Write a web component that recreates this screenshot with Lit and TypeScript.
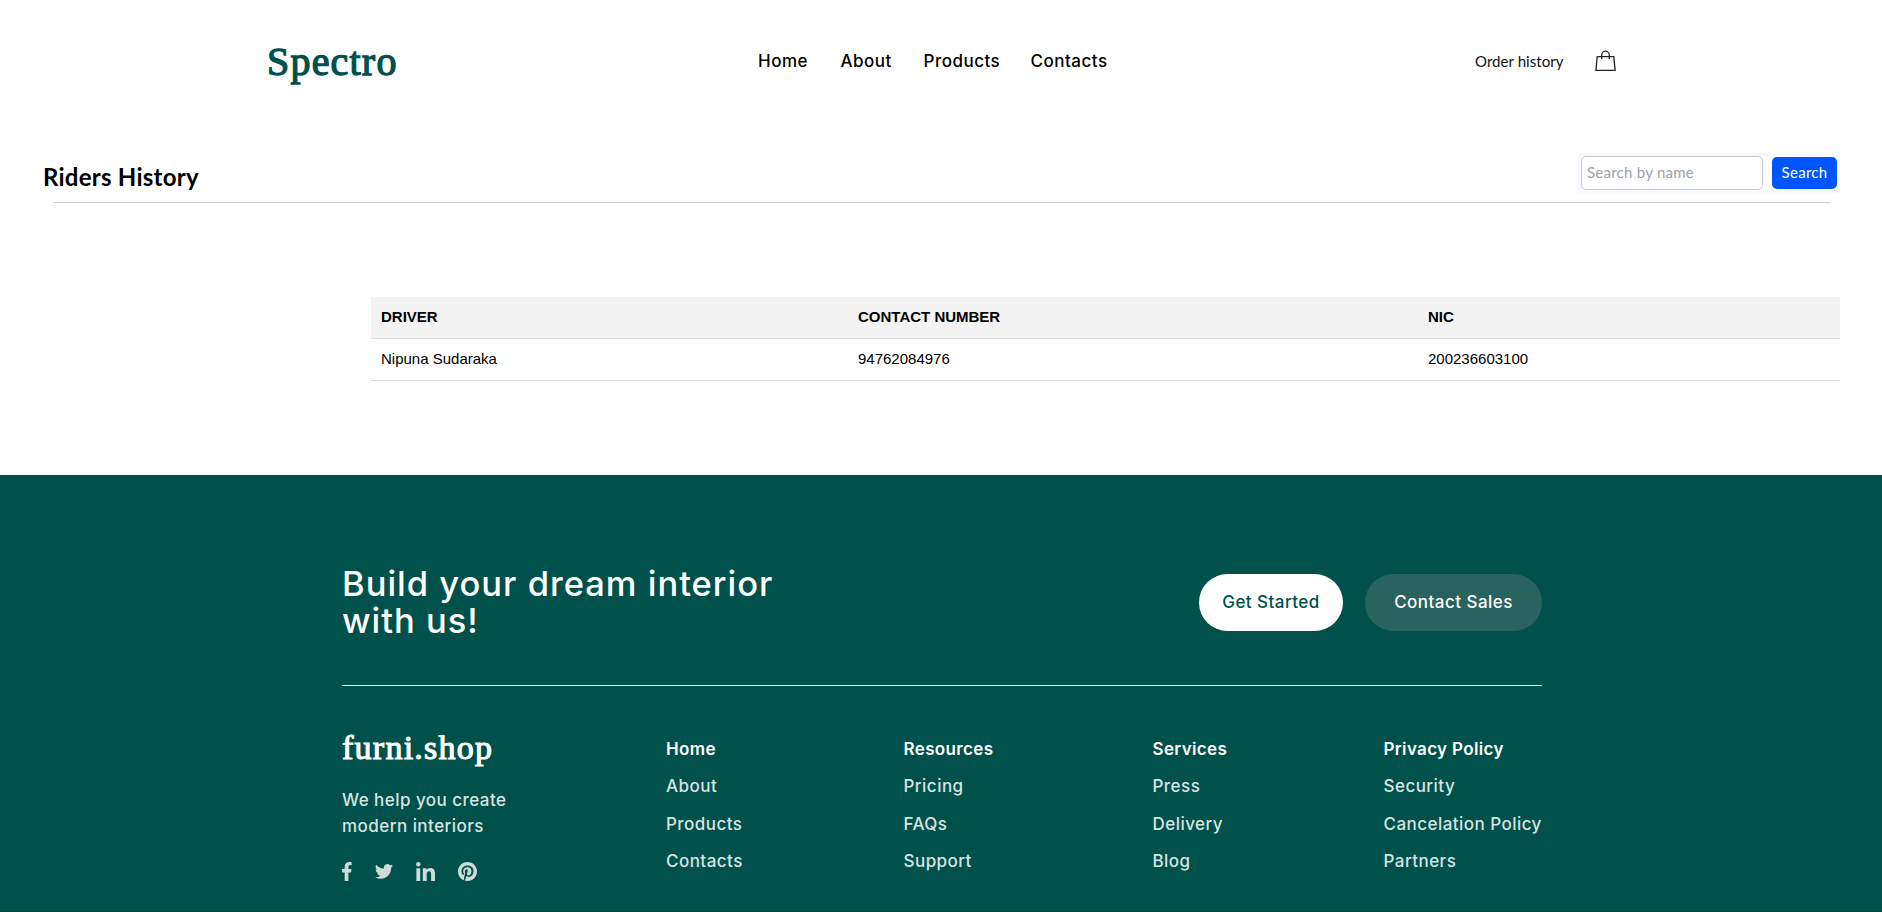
import { LitElement, html, css } from "lit";
import { customElement } from "lit/decorators.js";

const NAV = ["Home", "About", "Products", "Contacts"];

const COLUMNS = [
  ["Home", "About", "Products", "Contacts"],
  ["Resources", "Pricing", "FAQs", "Support"],
  ["Services", "Press", "Delivery", "Blog"],
  ["Privacy Policy", "Security", "Cancelation Policy", "Partners"],
];

const RIDERS = [{ driver: "Nipuna Sudaraka", contact: "94762084976", nic: "200236603100" }];

@customElement("site-header")
class SiteHeader extends LitElement {
  static styles = css`
    :host {
      display: grid;
      grid-template-columns: 491px 717px 120px auto;
      align-items: center;
      box-sizing: border-box;
      height: 121px;
      padding-left: 267px;
    }
    .brand {
      font: 400 40px/50px "Liberation Serif", serif;
      -webkit-text-stroke: 1.3px #00504b;
      letter-spacing: 1.2px;
      color: #00504b;
      padding-top: 2px;
    }
    nav {
      display: grid;
      grid-template-columns: 82.5px 83px 107px 78px;
      padding-top: 1px;
      font: 470 17px/24px Inter, sans-serif;
      letter-spacing: 0.5px;
      color: #000;
    }
    .history {
      font: 400 15px/20px Lato, sans-serif;
      letter-spacing: 0.05px;
      color: #111;
    }
    svg {
      display: block;
    }
  `;
  render() {
    return html`
      <div class="brand">Spectro</div>
      <nav>${NAV.map((n) => html`<span>${n}</span>`)}</nav>
      <div class="history">Order history</div>
      <svg width="21" height="22" viewBox="0 0 21 22" fill="none" stroke="#222" stroke-width="1.3">
        <path d="M2.2 6.6H18.8L20.1 20.4H.9Z" />
        <path d="M6.7 9V5.2A3.8 4 0 0 1 14.3 5.2V9" />
      </svg>
    `;
  }
}

@customElement("riders-page")
class RidersPage extends LitElement {
  static styles = css`
    :host {
      display: block;
      box-sizing: border-box;
      height: 354px;
      padding: 32px 42px 0 43px;
    }
    .top {
      display: flex;
      justify-content: space-between;
      height: 49px;
    }
    h1 {
      margin: 8px 0 0;
      font: 700 24px/32px Lato, sans-serif;
      letter-spacing: 0.25px;
      color: #000;
    }
    .search {
      display: flex;
      align-items: center;
      justify-content: space-between;
      box-sizing: border-box;
      width: 262px;
      height: 40px;
      border: 3px solid #f8f8ff;
      font: 400 15px/20px Lato, sans-serif;
    }
    input {
      box-sizing: border-box;
      width: 182px;
      height: 34px;
      padding: 0 5px 2px;
      border: 1px solid #c8c8c8;
      border-radius: 5px;
      font: inherit;
      letter-spacing: 0.25px;
      background: #fff;
    }
    input::placeholder {
      color: #9ca3af;
      opacity: 1;
    }
    button {
      width: 65px;
      height: 32px;
      padding: 0 0 2px;
      border: 0;
      border-radius: 5px;
      background: #0055ff;
      color: #fff;
      font: inherit;
      letter-spacing: 0.3px;
    }
    hr {
      margin: 0 10px;
      border: 0;
      height: 1px;
      background: #cccccc;
    }
    table {
      width: 1469px;
      margin: 94px 0 0 328px;
      border-collapse: separate;
      border-spacing: 0;
      table-layout: fixed;
      font: 400 15px/20px "Liberation Sans", sans-serif;
      color: #000;
    }
    th,
    td {
      height: 39px;
      padding: 0 10px 2px;
      text-align: left;
      border-bottom: 1px solid #ddd;
      box-sizing: content-box;
      vertical-align: middle;
    }
    th {
      background: #f3f3f3;
      font-weight: 700;
      text-transform: uppercase;
    }
    .c1 {
      width: 477px;
    }
    .c2 {
      width: 570px;
    }
  `;
  render() {
    return html`
      <div class="top">
        <h1>Riders History</h1>
        <div class="search">
          <input placeholder="Search by name" />
          <button>Search</button>
        </div>
      </div>
      <hr />
      <table>
        <colgroup>
          <col class="c1" />
          <col class="c2" />
          <col />
        </colgroup>
        <thead>
          <tr><th>Driver</th><th>Contact Number</th><th>NIC</th></tr>
        </thead>
        <tbody>
          ${RIDERS.map((r) => html`<tr><td>${r.driver}</td><td>${r.contact}</td><td>${r.nic}</td></tr>`)}
        </tbody>
      </table>
    `;
  }
}

@customElement("site-footer")
class SiteFooter extends LitElement {
  static styles = css`
    :host {
      display: block;
      box-sizing: border-box;
      height: 437px;
      padding: 89px 340px 0 342px;
      background: #00504b;
      border-bottom: 1px solid #00423e;
      font: 470 17px/24px Inter, sans-serif;
      letter-spacing: 0.46px;
      white-space: nowrap;
      color: #fff;
    }
    .cta {
      display: flex;
      justify-content: space-between;
      height: 121px;
      border-bottom: 1px solid #e2eceb;
    }
    .headline {
      padding-top: 1px;
      font-size: 34.5px;
      line-height: 37px;
      letter-spacing: 1px;
    }
    .buttons {
      display: flex;
      gap: 22px;
      padding-top: 10px;
    }
    .btn {
      box-sizing: border-box;
      height: 57px;
      line-height: 57px;
      width: 144px;
      border-radius: 29px;
      background: #fff;
      color: #00504b;
      text-align: center;
    }
    .btn.sales {
      width: 177px;
      background: #286360;
      color: #fff;
    }
    .links {
      display: grid;
      grid-template-columns: 324px 237.5px 249px 231px auto;
      padding-top: 41px;
    }
    .logo {
      font: 400 34px/42px "Liberation Serif", serif;
      -webkit-text-stroke: 1.1px #fff;
      letter-spacing: 1.25px;
    }
    .tag {
      margin-top: 18px;
      line-height: 26px;
      color: #d8e4e3;
    }
    .social {
      display: grid;
      grid-template-columns: 33px 41px 42px auto;
      align-items: center;
      margin-top: 22px;
      height: 20px;
    }
    .social svg {
      display: block;
      fill: #ccdcdb;
    }
    .col {
      line-height: 37.4px;
      padding-top: 4px;
      color: #d8e4e3;
    }
    .head {
      font-weight: 640;
      letter-spacing: 0.35px;
      color: #fff;
    }
  `;
  render() {
    return html`
      <div class="cta">
        <div class="headline">Build your dream interior<br />with us!</div>
        <div class="buttons">
          <div class="btn">Get Started</div>
          <div class="btn sales">Contact Sales</div>
        </div>
      </div>
      <div class="links">
        <div>
          <div class="logo">furni.shop</div>
          <div class="tag">We help you create<br />modern interiors</div>
          <div class="social">
            <svg width="10" height="19" viewBox="0 0 10 19">
              <path d="M2.7 19V10.6H0V7H2.7V4.6C2.7 1.7 4.5.1 7.2.1 8.4.1 9.3.2 9.6.2V3.3H7.9C6.7 3.3 6.4 3.9 6.4 4.9V7H9.5L9 10.6H6.4V19Z" />
            </svg>
            <svg width="18" height="15" viewBox="0 2 24 20">
              <path d="M23.95 4.57a10 10 0 0 1-2.82.77 4.96 4.96 0 0 0 2.16-2.72c-.95.55-2 .95-3.13 1.18a4.92 4.92 0 0 0-8.38 4.48C7.69 8.1 4.07 6.13 1.64 3.16a4.92 4.92 0 0 0 1.52 6.57 4.9 4.9 0 0 1-2.23-.61v.06a4.92 4.92 0 0 0 3.95 4.83 5 5 0 0 1-2.21.08 4.94 4.94 0 0 0 4.6 3.42A9.87 9.87 0 0 1 0 19.54a14 14 0 0 0 7.55 2.21c9.05 0 14-7.5 14-13.98 0-.21 0-.42-.02-.63a9.94 9.94 0 0 0 2.46-2.55z" />
            </svg>
            <svg width="19" height="19" viewBox="0 0 19 19">
              <circle cx="2.3" cy="2.3" r="2.2" />
              <path d="M.4 6.3H4.2V19H.4ZM6.8 6.3H10.5V8C11.1 7 12.3 6 14.3 6 18 6 19 8.4 19 11.7V19H15.1V12.5C15.1 10.8 14.9 9.3 13 9.3 11.1 9.3 10.7 10.8 10.7 12.5V19H6.8Z" />
            </svg>
            <svg width="19" height="19" viewBox="0 8 496 496">
              <path d="M496 256c0 137-111 248-248 248-25.6 0-50.2-3.9-73.4-11.1 10.1-16.5 25.2-43.5 30.8-65 3-11.6 15.4-59 15.4-59 8.1 15.4 31.7 28.5 56.8 28.5 74.8 0 128.7-68.8 128.7-154.3 0-81.9-66.9-143.2-152.9-143.2-107 0-163.9 71.8-163.9 150.1 0 36.4 19.4 81.7 50.3 96.1 4.7 2.2 7.2 1.2 8.3-3.3.8-3.4 5-20.3 6.9-28.1.6-2.5.3-4.7-1.7-7.1-10.1-12.5-18.3-35.3-18.3-56.6 0-54.7 41.4-107.6 112-107.6 60.9 0 103.6 41.5 103.6 100.9 0 67.1-33.9 113.6-78 113.6-24.3 0-42.6-20.1-36.7-44.8 7-29.5 20.5-61.3 20.5-82.6 0-19-10.2-34.9-31.4-34.9-24.9 0-44.9 25.7-44.9 60.2 0 22 7.4 36.8 7.4 36.8s-24.5 103.8-29 123.2c-5 21.4-3 51.6-.9 71.2C65.4 450.9 0 361.1 0 256 0 119 111 8 248 8s248 111 248 248z" />
            </svg>
          </div>
        </div>
        ${COLUMNS.map(
          ([head, ...rest]) => html`<div class="col">
            <div class="head">${head}</div>
            ${rest.map((r) => html`<div>${r}</div>`)}
          </div>`
        )}
      </div>
    `;
  }
}

@customElement("app-root")
class AppRoot extends LitElement {
  static styles = css`
    :host {
      display: block;
      height: 912px;
      overflow: hidden;
      background: #fff;
    }
  `;
  render() {
    return html`<site-header></site-header><riders-page></riders-page><site-footer></site-footer>`;
  }
}
